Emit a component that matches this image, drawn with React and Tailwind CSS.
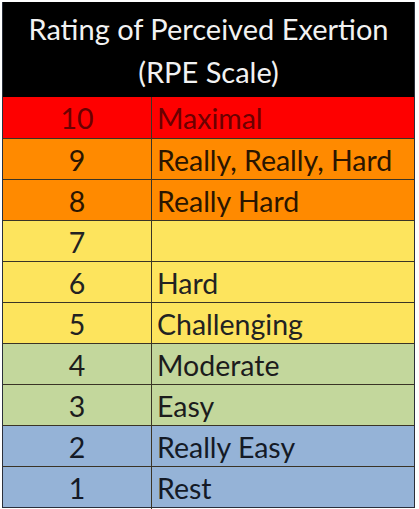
import React from 'react'

const rows = [
  { n: '10', label: 'Maximal', bg: 'bg-[#fe0000]', text: 'text-[#6b0000]' },
  { n: '9', label: 'Really, Really, Hard', bg: 'bg-[#ff8a00]', text: 'text-[#2a1500]' },
  { n: '8', label: 'Really Hard', bg: 'bg-[#ff8a00]', text: 'text-[#2a1500]' },
  { n: '7', label: '', bg: 'bg-[#fde45d]', text: 'text-[#222]' },
  { n: '6', label: 'Hard', bg: 'bg-[#fde45d]', text: 'text-[#222]' },
  { n: '5', label: 'Challenging', bg: 'bg-[#fde45d]', text: 'text-[#222]' },
  { n: '4', label: 'Moderate', bg: 'bg-[#c3d79c]', text: 'text-[#1c1c1c]' },
  { n: '3', label: 'Easy', bg: 'bg-[#c3d79c]', text: 'text-[#1c1c1c]' },
  { n: '2', label: 'Really Easy', bg: 'bg-[#95b3d7]', text: 'text-[#141a26]' },
  { n: '1', label: 'Rest', bg: 'bg-[#95b3d7]', text: 'text-[#141a26]' },
]

const App = () => {
  return (
    <div className="w-[419px] h-[509px] bg-white pt-[2px] pl-[2px] font-['Lato','Open_Sans',sans-serif]">
      <div className="w-[413px] border-l border-r border-b border-[#2a2f3a]">
        <div className="h-[95px] bg-black flex flex-col items-center justify-center text-[#f2f2f2] text-[29px] leading-[43px]">
          <p>Rating of Perceived Exertion</p>
          <p>(RPE Scale)</p>
        </div>
        {rows.map((r, i) => (
          <div
            key={r.n}
            className={`grid grid-cols-[149px_1fr] h-[41px] ${r.bg} ${r.text} text-[28.5px] ${i === 0 ? '' : 'border-t border-[#3a3426]'}`}
          >
            <div className="flex items-center justify-center border-r border-[#3a3426]">{r.n}</div>
            <div className="flex items-center pl-[5px]">{r.label}</div>
          </div>
        ))}
      </div>
    </div>
  )
}

export default App
